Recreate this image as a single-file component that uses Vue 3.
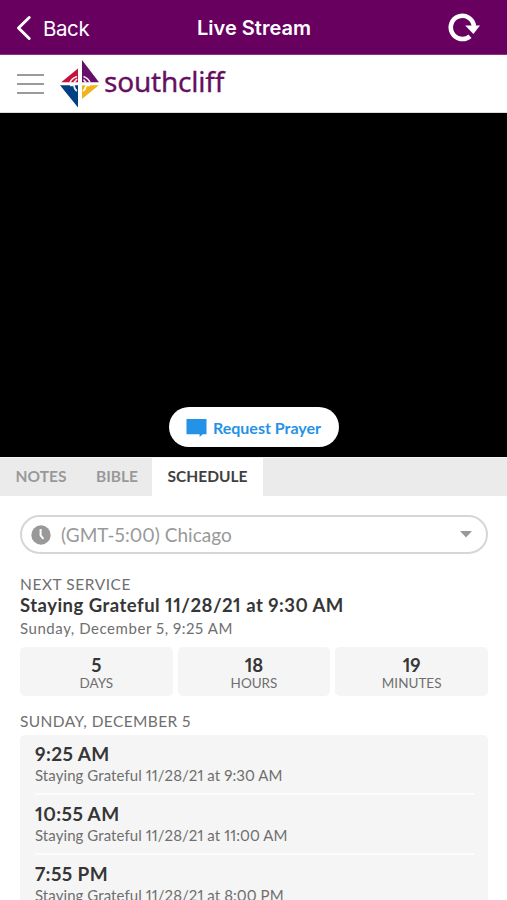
<script setup>
const tabs = [
  { label: 'NOTES', key: 'notes' },
  { label: 'BIBLE', key: 'bible' },
  { label: 'SCHEDULE', key: 'schedule', active: true },
]
const countdown = [
  { value: 5, unit: 'DAYS' },
  { value: 18, unit: 'HOURS' },
  { value: 19, unit: 'MINUTES' },
]
const services = [
  { time: '9:25 AM', title: 'Staying Grateful 11/28/21 at 9:30 AM' },
  { time: '10:55 AM', title: 'Staying Grateful 11/28/21 at 11:00 AM' },
  { time: '7:55 PM', title: 'Staying Grateful 11/28/21 at 8:00 PM' },
]
</script>

<template>
  <div class="screen">
    <header class="nav">
      <div class="back">
        <svg width="16" height="26" viewBox="0 0 16 26"><path d="M13.2 2.5 2.5 13l10.7 10.5" fill="none" stroke="#fff" stroke-width="3" stroke-linecap="round" stroke-linejoin="round" /></svg>
        <span>Back</span>
      </div>
      <h1>Live Stream</h1>
      <svg class="reload" width="34" height="30" viewBox="0 0 34 30">
        <path d="M23 23.2A11.6 11.6 0 1 1 26.9 13" fill="none" stroke="#fff" stroke-width="4.6" />
        <path d="M18.2 12.5H33L26.4 21z" fill="#fff" />
      </svg>
    </header>

    <div class="brand">
      <div class="menu"><i></i><i></i><i></i></div>
      <svg class="mark" width="40" height="48" viewBox="0 0 40 48">
        <path d="M22 0 39 22.3H22z" fill="#660f68" />
        <path d="M18 8.5V22.3H1.2z" fill="#c3123d" />
        <path d="M0 25.3H18V47.5z" fill="#003f82" />
        <path d="M22 25.3H38.8L22 39z" fill="#edb41c" />
        <path d="M10 22.5Q11.5 18.5 17 16.5M14 22.5 17 19M30 22.5Q28.5 18.5 23.5 16.5M26 22.5 23.5 19.5M10 25.3H14Q14.5 29.5 17 31M30 25.3H26Q25.5 29.5 23 31" fill="none" stroke="#fff" stroke-opacity=".9" stroke-width="1.7" />
      </svg>
      <span class="word">southcliff</span>
    </div>

    <div class="video">
      <button class="prayer">
        <svg width="21" height="20" viewBox="0 0 21 20"><path d="M.5 1h20v15.2h-3.8L13.6 19v-2.8H.5z" fill="#2492e6" /></svg>
        <span>Request Prayer</span>
      </button>
    </div>

    <nav class="tabs">
      <div v-for="t in tabs" :key="t.key" class="tab" :class="[t.key, { active: t.active }]"><span>{{ t.label }}</span></div>
    </nav>

    <main>
      <div class="zone">
        <svg width="20" height="20" viewBox="0 0 20 20"><circle cx="10" cy="10" r="9.7" fill="#999" /><path d="M9.6 4v6.4l2.8 3.4" fill="none" stroke="#fff" stroke-width="2" /></svg>
        <span>(GMT-5:00) Chicago</span>
        <svg class="caret" width="12" height="7" viewBox="0 0 12 7"><path d="M0 0h12L6 6.5z" fill="#999" /></svg>
      </div>

      <p class="label next">NEXT SERVICE</p>
      <h2>Staying Grateful 11/28/21 at 9:30 AM</h2>
      <p class="date">Sunday, December 5, 9:25 AM</p>

      <div class="count">
        <div v-for="c in countdown" :key="c.unit" class="cell">
          <b>{{ c.value }}</b><small>{{ c.unit }}</small>
        </div>
      </div>

      <p class="label day">SUNDAY, DECEMBER 5</p>
      <div class="list">
        <div v-for="s in services" :key="s.time" class="item">
          <b>{{ s.time }}</b><span>{{ s.title }}</span>
        </div>
      </div>
    </main>
  </div>
</template>

<style>
body { margin: 0; background: #fff; overflow: hidden; }
</style>

<style scoped>
* { box-sizing: border-box; }
.screen { width: 507px; height: 900px; overflow: hidden; background: #fff; font-family: Lato, sans-serif; font-variant-numeric: proportional-nums; color: #363636; white-space: nowrap; }
h1, h2, p { margin: 0; }
svg { display: block; flex: none; }
.nav { height: 55px; background: #67005f; border-bottom: 1px solid #8a3584; color: #fff; display: grid; grid-template-columns: 1fr auto 1fr; align-items: center; padding: 2px 26px 0 16px; font-family: Inter, sans-serif; }
.back { display: flex; align-items: center; gap: 11px; font-size: 20.5px; letter-spacing: -.4px; }
h1 { font-size: 20px; font-weight: 600; letter-spacing: 0; line-height: 28px; padding-left: 11px; }
.reload { justify-self: end; }
.brand { height: 58px; display: flex; align-items: center; padding-left: 17px; border-bottom: 1px solid #ddd; }
.menu { width: 27px; display: flex; flex-direction: column; gap: 7px; margin-right: 16px; }
.menu i { height: 2px; background: #9b9b9b; }
.word { font: 28px/36px "Noto Sans", sans-serif; letter-spacing: -.2px; color: #660f60; margin: -6px 0 0 4px; -webkit-text-stroke: .3px #660f60; }
.video { height: 344px; background: #000; display: flex; align-items: flex-end; justify-content: center; padding-bottom: 10px; }
.prayer { width: 170px; height: 40px; border: 0; border-radius: 20px; background: #fff; color: #2492e6; font: 700 16px/20px Lato, sans-serif; display: flex; align-items: center; justify-content: center; gap: 6px; padding: 2px 0 0; white-space: nowrap; }
.tabs { height: 39px; display: flex; background: #ebebeb; border-top: 1px solid #f6f6f6; font-size: 15.5px; font-weight: 700; color: #999; line-height: 36px; }
.tab { text-align: center; }
.notes { width: 82px; }
.bible { width: 70px; }
.schedule { width: 111px; }
.active { background: #fff; color: #404040; }
main { padding: 19px 19px 0 20px; }
.zone { height: 39px; border: 2px solid #d6d6d6; border-radius: 20px; display: flex; align-items: center; padding: 0 14px 0 9px; color: #999; font-size: 19px; letter-spacing: .05px; }
.zone span { margin-left: 10px; line-height: 21px; height: 21px; overflow: hidden; }
.caret { margin-left: auto; }
.label { color: #6f6f6f; font-size: 15.5px; line-height: 20px; letter-spacing: .4px; }
.next { margin-top: 20px; letter-spacing: .55px; }
h2 { font-size: 18.5px; line-height: 22px; font-weight: 700; letter-spacing: .48px; }
.date { color: #6f6f6f; font-size: 15px; line-height: 20px; margin-top: 2px; letter-spacing: .55px; }
.count { display: grid; grid-template-columns: repeat(3, 1fr); gap: 5px; margin-top: 9px; }
.cell { height: 49px; border-radius: 5px; background: #f5f5f5; display: flex; flex-direction: column; align-items: center; padding-top: 7px; }
.cell b { font-size: 18.5px; line-height: 22px; }
.cell small { font-size: 13.5px; line-height: 15px; color: #6f6f6f; }
.day { margin-top: 15px; }
.list { margin-top: 4px; background: #f5f5f5; border-radius: 5px 5px 0 0; padding: 0 14px 0 15px; height: 200px; }
.item { height: 60px; padding-top: 7px; border-bottom: 2px solid #fcfcfc; display: flex; flex-direction: column; }
.item b { font-size: 19px; line-height: 24px; letter-spacing: .4px; }
.item span { font-size: 15px; line-height: 19px; color: #6f6f6f; letter-spacing: .07px; }
</style>
